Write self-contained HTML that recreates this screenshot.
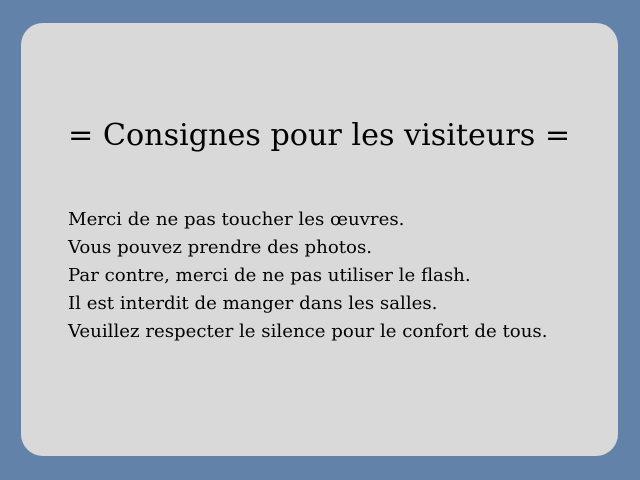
<!DOCTYPE html>
<html><head><style>
html,body{margin:0;padding:0}
body{width:640px;height:480px;background:#6282aa;position:relative;overflow:hidden;font-family:"DejaVu Serif","Liberation Serif",serif;color:#000}
.card{position:absolute;left:21px;top:23px;width:597px;height:433px;background:#d9d9d9;border-radius:22px}
h1{position:absolute;left:68px;top:115px;margin:0;font-weight:normal;font-size:30.2px;line-height:42px;white-space:nowrap}
.body{position:absolute;left:68px;top:206px;font-size:18.15px;line-height:28px;white-space:nowrap}
</style></head><body>
<div class="card"></div>
<h1>= Consignes pour les visiteurs =</h1>
<div class="body">
Merci de ne pas toucher les œuvres.<br>
Vous pouvez prendre des photos.<br>
Par contre, merci de ne pas utiliser le flash.<br>
Il est interdit de manger dans les salles.<br>
Veuillez respecter le silence pour le confort de tous.
</div>
</body></html>
